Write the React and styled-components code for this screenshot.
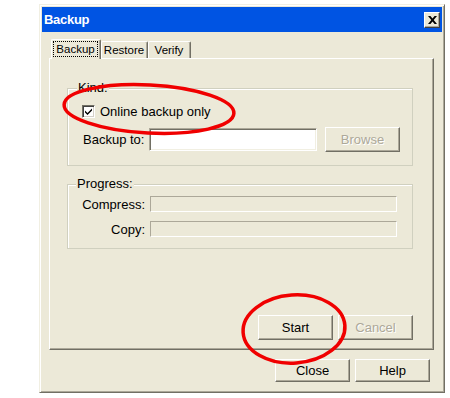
import React from "react";
import styled, { createGlobalStyle, css } from "styled-components";

const Global = createGlobalStyle`
  html, body { margin: 0; padding: 0; background: #ffffff; }
  body { font-family: "Liberation Sans", Arial, sans-serif; }
  * { box-sizing: border-box; }
`;

const Page = styled.div`
  position: relative;
  width: 450px;
  height: 398px;
  padding: 4px 0 0 39px;
  background: #ffffff;
`;

const Window = styled.div`
  width: 406px;
  height: 389px;
  background: #ece9d8;
  border: 1px solid;
  border-color: #f1efe2 #716f64 #716f64 #f1efe2;
  box-shadow: inset 1px 1px 0 #ffffff, inset -1px -1px 0 #aca899;
  padding: 2px;
  display: flex;
  flex-direction: column;
`;

const TitleBar = styled.div`
  height: 25px;
  background: #0054e3;
  display: flex;
  align-items: center;
  justify-content: space-between;
  padding: 0 2px 0 2px;
`;

const Title = styled.span`
  color: #ffffff;
  font: bold 13px "Liberation Sans", Arial, sans-serif;
  letter-spacing: -0.3px;
`;

const CloseBox = styled.div`
  width: 16px;
  height: 16px;
  background: #ece9d8;
  border: 1px solid;
  border-color: #ffffff #404040 #404040 #ffffff;
  box-shadow: inset -1px -1px 0 #aca899;
  display: flex;
  align-items: center;
  justify-content: center;
  margin-top: 1px;
`;

const Body = styled.div`
  flex: 1;
  display: flex;
  flex-direction: column;
  padding: 7px 8px 0 7px;
`;

const TabStrip = styled.div`
  display: flex;
  align-items: flex-end;
  padding-left: 2px;
  height: 19px;
  position: relative;
  z-index: 1;
`;

const Tab = styled.div`
  width: ${(p) => p.$w}px;
  height: ${(p) => (p.$active ? 20 : 17)}px;
  margin-bottom: ${(p) => (p.$active ? -1 : 0)}px;
  background: #ece9d8;
  border-top: 1px solid #ffffff;
  border-left: 1px solid #ffffff;
  border-right: 1px solid #716f64;
  border-radius: 2px 2px 0 0;
  box-shadow: inset -1px 0 0 #aca899;
  font: 11.5px "Liberation Sans", Arial, sans-serif;
  color: #000;
  display: flex;
  align-items: stretch;
  justify-content: stretch;
  padding: 1px 1px 1px 0;
  ${(p) =>
    p.$active &&
    css`
      padding: 1px 2px 2px 1px;
    `}
`;

const TabLabel = styled.span`
  flex: 1;
  display: flex;
  align-items: center;
  justify-content: center;
  border: 1px dotted ${(p) => (p.$focus ? "#000" : "transparent")};
  padding-bottom: 1px;
`;

const Panel = styled.div`
  height: 292px;
  background: #ece9d8;
  border: 1px solid;
  border-color: #ffffff #716f64 #716f64 #ffffff;
  box-shadow: inset -1px -1px 0 #aca899;
  display: flex;
  flex-direction: column;
  padding: 29px 20px 9px 17px;
`;

const Group = styled.div`
  position: relative;
  border: 1px solid #d0d0bf;
  box-shadow: inset 1px 1px 0 #ffffff;
  padding: ${(p) => p.$pad};
  margin-top: ${(p) => p.$mt || 0}px;
  display: flex;
  flex-direction: column;
`;

const Legend = styled.span`
  position: absolute;
  top: -9px;
  left: ${(p) => p.$left}px;
  padding: 0 1px;
  background: #ece9d8;
  font: 13px "Liberation Sans", Arial, sans-serif;
  line-height: 16px;
  color: #000;
`;

const Row = styled.div`
  display: flex;
  align-items: center;
  height: ${(p) => p.$h}px;
  margin-top: ${(p) => p.$mt || 0}px;
`;

const CheckBox = styled.div`
  width: 13px;
  height: 13px;
  background: #ffffff;
  border: 1px solid;
  border-color: #716f64 #ffffff #ffffff #716f64;
  box-shadow: inset 1px 1px 0 #404040, inset -1px -1px 0 #d4d0c8;
  display: flex;
  align-items: center;
  justify-content: center;
`;

const Text = styled.span`
  font: 13px "Liberation Sans", Arial, sans-serif;
  color: #000;
  margin-left: ${(p) => p.$ml || 0}px;
  width: ${(p) => (p.$w ? p.$w + "px" : "auto")};
  text-align: ${(p) => p.$align || "left"};
  flex-shrink: 0;
`;

const TextField = styled.div`
  width: 168px;
  height: 23px;
  background: #ffffff;
  border: 1px solid;
  border-color: #aca899 #ffffff #ffffff #aca899;
  box-shadow: inset 1px 1px 0 #716f64, inset -1px -1px 0 #f1efe2;
`;

const ProgressField = styled.div`
  width: 247px;
  height: 16px;
  margin-left: 5px;
  background: #ece9d8;
  border: 1px solid;
  border-color: #aca899 #ffffff #ffffff #aca899;
`;

const Button = styled.div`
  width: 75px;
  height: ${(p) => p.$h || 23}px;
  margin-left: ${(p) => p.$ml || 0}px;
  background: #ece9d8;
  border: 1px solid;
  border-color: #ffffff #716f64 #716f64 #ffffff;
  box-shadow: inset -1px -1px 0 #aca899;
  display: flex;
  align-items: center;
  justify-content: center;
  font: 13px "Liberation Sans", Arial, sans-serif;
  color: ${(p) => (p.$disabled ? "#aca899" : "#000")};
  text-shadow: ${(p) => (p.$disabled ? "1px 1px 0 #ffffff" : "none")};
  padding-bottom: 1px;
`;

const ButtonRow = styled.div`
  display: flex;
  justify-content: flex-end;
  margin-top: auto;
`;

const Footer = styled.div`
  display: flex;
  justify-content: flex-end;
  padding: 9px 4px 0 0;
`;

const Marks = styled.svg`
  position: absolute;
  left: 0;
  top: 0;
  pointer-events: none;
`;

export default function App() {
  return (
    <>
      <Global />
      <Page>
        <Window>
          <TitleBar>
            <Title>Backup</Title>
            <CloseBox>
              <svg width="9" height="8" viewBox="0 0 9 8">
                <path d="M0 0h2.4l2.1 2.5L6.6 0H9L5.7 4 9 8H6.6L4.5 5.5 2.4 8H0l3.3-4z" fill="#000" />
              </svg>
            </CloseBox>
          </TitleBar>
          <Body>
            <TabStrip>
              <Tab $active $w={50}>
                <TabLabel $focus>Backup</TabLabel>
              </Tab>
              <Tab $w={47}>
                <TabLabel>Restore</TabLabel>
              </Tab>
              <Tab $w={43}>
                <TabLabel>Verify</TabLabel>
              </Tab>
            </TabStrip>
            <Panel>
              <Group $pad="16px 12px 13px 14px">
                <Legend $left={9}>Kind:</Legend>
                <Row $h={13}>
                  <CheckBox>
                    <svg width="7" height="7" viewBox="0 0 7 7">
                      <path d="M0 2.5L2.5 5 7 0.5V2.5L2.5 7 0 4.5z" fill="#000" />
                    </svg>
                  </CheckBox>
                  <Text $ml={5}>Online backup only</Text>
                </Row>
                <Row $h={25} $mt={9}>
                  <Text $ml={1} $w={66}>Backup to:</Text>
                  <TextField />
                  <Button $h={25} $ml={8} $disabled>Browse</Button>
                </Row>
              </Group>
              <Group $pad="11px 15px 11px 0" $mt={18}>
                <Legend $left={8}>Progress:</Legend>
                <Row $h={16}>
                  <Text $w={77} $align="right">Compress:</Text>
                  <ProgressField />
                </Row>
                <Row $h={16} $mt={9}>
                  <Text $w={77} $align="right">Copy:</Text>
                  <ProgressField />
                </Row>
              </Group>
              <ButtonRow>
                <Button $h={25}>Start</Button>
                <Button $h={25} $ml={5} $disabled>Cancel</Button>
              </ButtonRow>
            </Panel>
            <Footer>
              <Button>Close</Button>
              <Button $ml={5}>Help</Button>
            </Footer>
          </Body>
        </Window>
        <Marks width="450" height="398" viewBox="0 0 450 398">
          <ellipse cx="149" cy="109" rx="85" ry="24" transform="rotate(3 149 109)" fill="none" stroke="#f00000" strokeWidth="3.5" />
          <ellipse cx="294" cy="329" rx="51" ry="34" transform="rotate(-4 294 329)" fill="none" stroke="#f00000" strokeWidth="3.5" />
        </Marks>
      </Page>
    </>
  );
}
